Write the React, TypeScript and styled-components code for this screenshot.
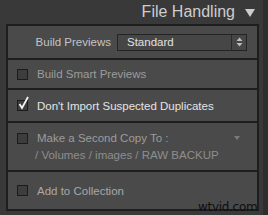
import styled, { createGlobalStyle } from "styled-components";

const GlobalStyle = createGlobalStyle`
  html, body {
    margin: 0;
    padding: 0;
    background: #393939;
  }
  body {
    font-family: "Liberation Sans", Arial, sans-serif;
  }
`;

const Page = styled.div`
  position: relative;
  width: 268px;
  height: 215px;
  overflow: hidden;
  background: #393939;
  border-right: 5px solid #2e2e2e;
  box-sizing: border-box;
`;

const Header = styled.div`
  height: 24px;
  display: flex;
  align-items: center;
  justify-content: flex-end;
  padding-right: 8px;
  gap: 10px;
  color: #cdcdcd;
  font-size: 16px;
`;

const Triangle = styled.span`
  width: 0;
  height: 0;
  border-left: 5px solid transparent;
  border-right: 5px solid transparent;
  border-top: 8px solid #cdcdcd;
  margin-top: 2px;
`;

const Panel = styled.div`
  margin: 0 4px 0 6px;
  border: 2px solid #1e1e1e;
  background: #4a4a4a;
  display: flex;
  flex-direction: column;
`;

const Section = styled.div<{ $h: number }>`
  height: ${(p) => p.$h}px;
  box-sizing: border-box;
  border-bottom: 2px solid #1e1e1e;
  padding: 0 9px;
  display: flex;
  flex-direction: column;
  justify-content: center;
  &:last-child {
    border-bottom: none;
  }
`;

const Row = styled.div`
  display: flex;
  align-items: center;
  gap: 9px;
`;

const PreviewRow = styled.div`
  display: flex;
  align-items: center;
  justify-content: flex-end;
  gap: 6px;
  padding-right: 1px;
`;

const Label = styled.span<{ $tone: string }>`
  color: ${(p) => p.$tone};
  font-size: 11.5px;
  white-space: nowrap;
`;

const Select = styled.div`
  width: 130px;
  height: 17px;
  box-sizing: border-box;
  border: 1px solid #242424;
  background: #464646;
  display: flex;
  align-items: center;
  justify-content: space-between;
  padding-left: 9px;
  color: #e2e2e2;
  font-size: 11.5px;
`;

const Stepper = styled.div`
  width: 14px;
  height: 15px;
  border-left: 1px solid #2a2a2a;
  display: flex;
  align-items: center;
  justify-content: center;
`;

const Box = styled.span`
  position: relative;
  width: 9px;
  height: 9px;
  border: 1px solid #1c1c1c;
  background: #3d3d3d;
  flex-shrink: 0;
`;

const Check = styled.svg`
  position: absolute;
  left: 0;
  top: -5px;
`;

const CopyRow = styled.div`
  display: flex;
  align-items: center;
  justify-content: space-between;
  padding-right: 8px;
`;

const PathText = styled.div`
  color: #8e8e8e;
  font-size: 11.5px;
  margin: 5px 0 0 18px;
`;

const SmallArrow = styled.span`
  width: 0;
  height: 0;
  border-left: 3px solid transparent;
  border-right: 3px solid transparent;
  border-top: 4px solid #7a7a7a;
`;

const Watermark = styled.div`
  position: absolute;
  left: 198px;
  top: 200px;
  color: #0e0e0e;
  font-size: 12px;
  font-family: "DejaVu Sans", sans-serif;
  letter-spacing: -0.3px;
`;

export default function App() {
  return (
    <Page>
      <GlobalStyle />
      <Header>
        <span>File Handling</span>
        <Triangle />
      </Header>
      <Panel>
        <Section $h={34}>
          <PreviewRow>
            <Label $tone="#c4c4c4">Build Previews</Label>
            <Select>
              <span>Standard</span>
              <Stepper>
                <svg width="7" height="10" viewBox="0 0 7 10">
                  <path d="M3.5 0.5 L6.5 4 H0.5 Z M3.5 9.5 L6.5 6 H0.5 Z" fill="#bdbdbd" />
                </svg>
              </Stepper>
            </Select>
          </PreviewRow>
        </Section>
        <Section $h={30}>
          <Row>
            <Box />
            <Label $tone="#9c9c9c">Build Smart Previews</Label>
          </Row>
        </Section>
        <Section $h={33}>
          <Row>
            <Box>
              <Check width="12" height="14" viewBox="0 0 12 14">
                <path d="M1.5 8 L4 12 L10 1" stroke="#f2f2f2" strokeWidth="1.8" fill="none" />
              </Check>
            </Box>
            <Label $tone="#e4e4e4">Don't Import Suspected Duplicates</Label>
          </Row>
        </Section>
        <Section $h={49}>
          <CopyRow>
            <Row>
              <Box />
              <Label $tone="#9c9c9c">Make a Second Copy To :</Label>
            </Row>
            <SmallArrow />
          </CopyRow>
          <PathText>/ Volumes / images / RAW BACKUP</PathText>
        </Section>
        <Section $h={37}>
          <Row>
            <Box />
            <Label $tone="#a8a8a8">Add to Collection</Label>
          </Row>
        </Section>
      </Panel>
      <Watermark>wtvid.com</Watermark>
    </Page>
  );
}
